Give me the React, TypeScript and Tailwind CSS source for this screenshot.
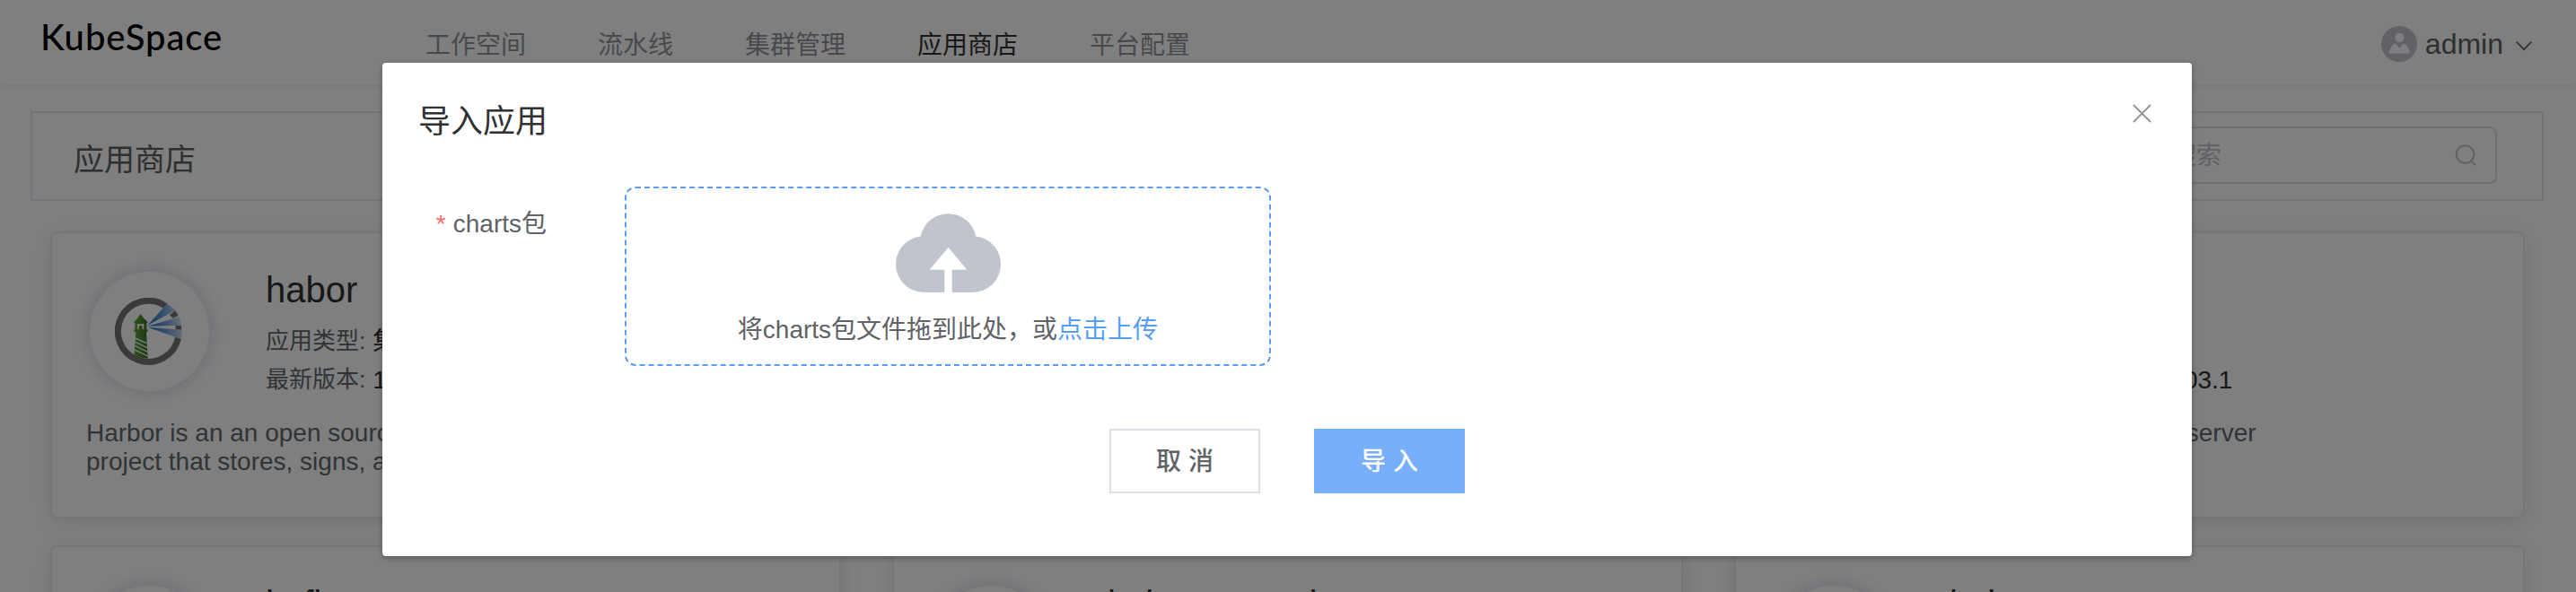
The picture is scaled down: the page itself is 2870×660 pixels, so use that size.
import React from "react";

const NAV = [
  { label: "工作空间" },
  { label: "流水线" },
  { label: "集群管理" },
  { label: "应用商店", active: true },
  { label: "平台配置" },
];

type Chart = {
  name: string;
  version: string;
  lines: string[];
  logo?: boolean;
};

const CHARTS: Chart[] = [
  {
    name: "habor",
    version: "1.8.1",
    lines: ["Harbor is an an open source trusted cloud native registry", "project that stores, signs, and scans content."],
    logo: true,
  },
  { name: "nginx", version: "1.0.0", lines: ["Nginx ingress controller"] },
  { name: "nacos", version: "1.0.0-2022.03.1", lines: ["Open source time series and metrics server"] },
  { name: "kafka", version: "1.0.0", lines: ["Kafka"] },
  { name: "kube-prometheus", version: "1.0.0", lines: ["Prometheus"] },
  { name: "kubernetes", version: "1.0.0", lines: ["Kubernetes"] },
];

function HarborLogo() {
  return (
    <svg className="-ml-[2px] h-[75px] w-[75px]" viewBox="0 0 225 225">
      <defs>
        <linearGradient id="beam" gradientUnits="userSpaceOnUse" x1="109" y1="95" x2="225" y2="80">
          <stop offset="0" stopColor="#1f78bd" />
          <stop offset="0.45" stopColor="#5f9bd6" />
          <stop offset="1" stopColor="#d4e2f7" />
        </linearGradient>
        <linearGradient id="tower" x1="0" x2="1" y1="0" y2="0">
          <stop offset="0" stopColor="#62a83e" />
          <stop offset="1" stopColor="#3a6d28" />
        </linearGradient>
      </defs>
      <path
        d="M211.8 133.2 A102 102 0 1 1 169 27.4"
        fill="none"
        stroke="#747474"
        strokeWidth="21"
      />
      <path d="M183 57 L202 43 L212 60 L193 68Z" fill="#747474" />
      <path d="M202 92 L222 92 L223 107 L203 107Z" fill="#747474" />
      <path d="M109 92 L174 20 Q190 29 202 42Z" fill="url(#beam)" />
      <path d="M109 95 L214 64 Q221 77 223 92Z" fill="url(#beam)" />
      <path d="M109 98 L225 107 Q225 122 220 138Z" fill="url(#beam)" />
      <g fill="url(#tower)">
        <path
          fillRule="evenodd"
          d="M86 54 L97 69 L109 80 V84 H106 V106 H109 V115 H105 L110 203 Q86 203 64 190 L70 115 H64 V106 H67 V84 H64 V80 L75 69Z M75 88 V106 H80 V96 Q86 88 92 96 V106 H97 V88Z"
        />
      </g>
      <g stroke="#fff" strokeWidth="4">
        <path d="M66 134 L106 152" />
        <path d="M66 147 L108 167" />
        <path d="M64 159 L110 181" />
        <path d="M62 172 L110 195" />
      </g>
    </svg>
  );
}

function ChartCard({ chart }: { chart: Chart }) {
  return (
    <div className="h-[320px] w-[881px] shrink-0 rounded-[8px] border-2 border-[#ebebf6] bg-white px-[38px] pt-[43px] shadow-[0_4px_24px_rgba(0,0,0,0.1)]">
      <div className="flex">
        <div className="ml-[4px] flex h-[133px] w-[133px] shrink-0 items-center justify-center rounded-full bg-white shadow-[0_0_18px_4px_#dce1ea]">
          {chart.logo && <HarborLogo />}
        </div>
        <div className="-mt-[3px] ml-[63px] whitespace-nowrap">
          <div className="h-[59px] text-[40px] leading-[46px] text-[#303133]">{chart.name}</div>
          <div className="flex h-[43px] items-center text-[26px] leading-[43px] text-[#62686e]">
            <span>应用类型:</span>
            <span className="ml-[8px] text-[28px] text-[#303133]">集群组件</span>
          </div>
          <div className="flex h-[43px] items-center text-[26px] leading-[43px] text-[#62686e]">
            <span>最新版本:</span>
            <span className="ml-[8px] text-[28px] text-[#303133]">{chart.version}</span>
          </div>
        </div>
      </div>
      <div className="mt-[22px] w-[545px] text-[28px] leading-[32px] whitespace-nowrap text-[#5f686e]">
        {chart.lines.map((line) => (
          <div key={line}>{line}</div>
        ))}
      </div>
    </div>
  );
}

function Header() {
  return (
    <header className="relative flex h-[94px] bg-white shadow-[0_2px_8px_rgba(0,21,41,0.08)]">
      <div className="w-[427px] shrink-0 pt-[16px] pl-[45px] font-[Lato,sans-serif] text-[40px] leading-[50px] font-medium tracking-[0.9px] text-black">
        KubeSpace
      </div>
      <nav className="flex gap-[80px] pt-[31px] pl-[47px] text-[28px] leading-[40px]">
        {NAV.map((item) => (
          <span key={item.label} className={item.active ? "text-[#303133]" : "text-[#909399]"}>
            {item.label}
          </span>
        ))}
      </nav>
      <div className="ml-auto flex h-[98px] items-center pr-[48px]">
        <svg className="h-[40px] w-[40px]" viewBox="0 0 40 40">
          <circle cx="20" cy="20" r="20" fill="#c0c4cc" />
          <ellipse cx="20.3" cy="13" rx="5" ry="5.2" fill="#fff" />
          <path d="M8.8 30.5 Q9.5 22 16 19.6 L20.3 24.5 L24.8 19.6 Q31 22 31.8 30.5Z" fill="#fff" />
        </svg>
        <span className="ml-[9px] text-[32px] leading-[40px] text-[#5a5e60]">admin</span>
        <svg className="mt-[3px] ml-[13px] h-[12px] w-[20px]" viewBox="0 0 20 12">
          <path d="M1.5 1.5 L10 10 L18.5 1.5" fill="none" stroke="#5a5e60" strokeWidth="1.7" />
        </svg>
      </div>
    </header>
  );
}

function Toolbar() {
  return (
    <div className="mt-[30px] mr-[36px] ml-[34px] flex h-[100px] items-center justify-between border-2 border-[#e6e6f4] pr-[50px] pl-[46px]">
      <span className="pt-[7px] text-[34px] leading-[48px] text-[#5c5f62]">应用商店</span>
      <div className="mb-[2px] flex h-[64px] w-[500px] items-center justify-between rounded-[8px] border-2 border-[#dcdfe6] pr-[19px] pl-[23px]">
        <span className="pt-[2px] text-[28px] leading-[40px] text-[#c0c4cc]">输入名称搜索</span>
        <svg className="h-[28px] w-[28px]" viewBox="0 0 28 28" fill="none" stroke="#c0c4cc" strokeWidth="2">
          <circle cx="13.5" cy="13" r="9.8" />
          <path d="M20 20.5 L25 25" />
        </svg>
      </div>
    </div>
  );
}

function ImportDialog() {
  return (
    <div className="absolute inset-0 flex justify-center bg-black/50 pt-[70px] pr-[2px]">
      <div className="flex h-[550px] w-[2016px] flex-col rounded-[4px] bg-white shadow-[0_2px_6px_rgba(0,0,0,0.3)]">
        <div className="flex h-[138px] justify-between pr-[45px] pl-[40px]">
          <h2 className="pt-[42px] text-[36px] leading-[48px] text-[#303133]">导入应用</h2>
          <svg className="mt-[46px] h-[21px] w-[21px]" viewBox="0 0 21 21">
            <path d="M1 1 L20 20 M20 1 L1 20" stroke="#909399" strokeWidth="1.8" />
          </svg>
        </div>
        <div className="flex h-[270px]">
          <div className="flex w-[183px] justify-end pt-[22px] text-[28px] leading-[40px] text-[#606266]">
            <span className="mr-[8px] text-[#f56c6c]">*</span>
            <span>charts包</span>
          </div>
          <div className="ml-[87px] flex h-[200px] w-[720px] flex-col items-center rounded-[12px] border-2 border-dashed border-[#589df8] pt-[28px]">
            <svg className="h-[88px] w-[117px] shrink-0" viewBox="64 192 896 672">
              <path
                fill="#c0c4cc"
                d="M544 864V672h128L512 480 352 672h128v192H320v-1.6c-5.376.32-10.496 1.6-16 1.6A240 240 0 0 1 64 624c0-123.136 93.12-223.488 212.608-237.248A239.808 239.808 0 0 1 512 192a239.872 239.872 0 0 1 235.456 194.752c119.488 13.76 212.48 114.112 212.48 237.248a240 240 0 0 1-240 240c-5.376 0-10.56-1.28-16-1.6v1.6H544z"
              />
            </svg>
            <div className="mt-[22px] text-[28px] leading-[40px] text-[#606266]">
              将charts包文件拖到此处，或<span className="text-[#589df8]">点击上传</span>
            </div>
          </div>
        </div>
        <div className="flex justify-center gap-[60px] text-[28px] leading-[40px] font-medium">
          <button className="h-[72px] w-[168px] border-2 border-[#dcdfe6] bg-white pt-[2px] text-[#606266]">取 消</button>
          <button className="h-[72px] w-[168px] bg-[#78affa] pt-[2px] text-white">导 入</button>
        </div>
      </div>
    </div>
  );
}

export default function App() {
  return (
    <div className="relative h-[660px] w-[2870px] overflow-hidden bg-white font-['Liberation_Sans','Noto_Sans_CJK_SC',sans-serif]">
      <Header />
      <Toolbar />
      <div className="mt-[34px] grid grid-cols-[881px_881px_881px] gap-x-[57px] gap-y-[30px] pl-[56px]">
        {CHARTS.map((chart) => (
          <ChartCard key={chart.name} chart={chart} />
        ))}
      </div>
      <ImportDialog />
    </div>
  );
}
